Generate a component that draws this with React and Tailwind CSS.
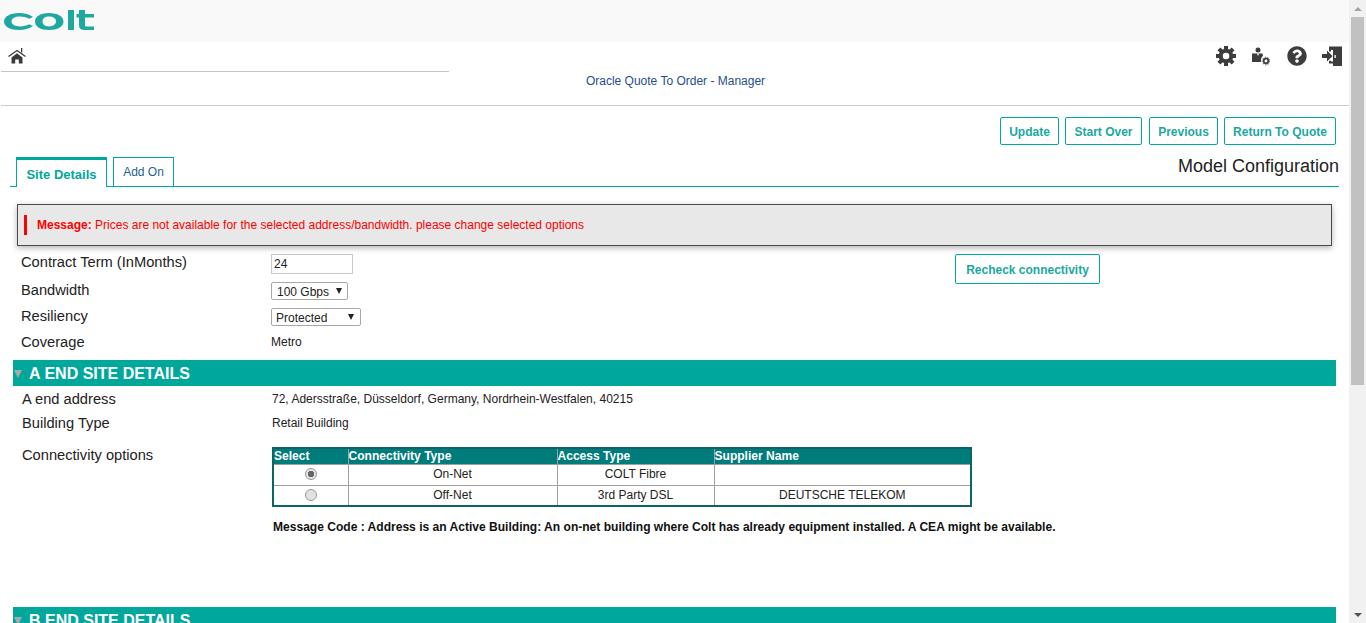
import React from "react";
import { FaQuestionCircle } from "react-icons/fa";

function Logo() {
  return (
    <svg width="92" height="22" viewBox="0 0 92 22" className="block">
      <path fillRule="evenodd" fill="#1fa89f" d="M1 12.500C1 7.500 7.500 4 16 4C21.500 4 26.500 5.500 30 8L26 9.800C23.500 8.400 20.500 7.600 17 7.600C12 7.600 8.500 9.500 8.500 12.500C8.500 15.500 12 17.400 17 17.400C20.500 17.400 23.500 16.600 26 15.200L30 17C26.500 19.500 21.500 21 16 21C7.500 21 1 17.500 1 12.500Z" />
      <path fillRule="evenodd" fill="#1fa89f" d="M46 4C54.500 4 60.500 7.500 60.500 12.500C60.500 17.500 54.500 21 46 21C37.500 21 32 17.500 32 12.500C32 7.500 37.500 4 46 4ZM46 7.600C42 7.600 39.500 9.500 39.500 12.500C39.500 15.500 42 17.400 46 17.400C50 17.400 53 15.500 53 12.500C53 9.500 50 7.600 46 7.600Z" />
      <rect x="65" y="1" width="6" height="20" fill="#1fa89f" />
      <path d="M76 1H82V5H91V8.500H82V16C82 17 82.500 17.500 84 17.500H91V21H82C78 21 76 19.500 76 16.500V8.500H73.500V5H76Z" fill="#1fa89f" />
    </svg>
  );
}

function HomeIcon() {
  return (
    <svg width="18" height="16" viewBox="0 0 18 16" className="block">
      <path d="M0.500 8.500L9 2.500L17.500 8.500" fill="none" stroke="#3a3a3a" strokeWidth="1.300" />
      <rect x="13" y="0" width="1.300" height="4.500" fill="#3a3a3a" />
      <path d="M3.500 9.500L9 5.300L14.500 9.500V15.500H10.800V11.500H7.200V15.500H3.500Z" fill="#3a3a3a" />
    </svg>
  );
}

function GearIcon() {
  const teeth = [0, 45, 90, 135, 180, 225, 270, 315];
  return (
    <svg width="20" height="20" viewBox="0 0 20 20" className="block">
      <circle cx="10" cy="10" r="5.300" fill="none" stroke="#3d3d3d" strokeWidth="4" />
      {teeth.map((a) => (
        <rect key={a} x="8" y="0" width="4" height="4" fill="#3d3d3d" transform={`rotate(${a} 10 10)`} />
      ))}
    </svg>
  );
}

function UserCog() {
  return (
    <svg width="20" height="20" viewBox="0 0 20 20" className="block">
      <circle cx="8" cy="4" r="2.500" fill="#3d3d3d" />
      <path d="M2 7.500H12.500L13 10C11.500 11 10.800 12.500 11 16H2Z" fill="#3d3d3d" />
      <path d="M6.800 7.500L8 10L9.200 7.500Z" fill="#fff" />
      <circle cx="16" cy="15" r="2.300" fill="none" stroke="#3d3d3d" strokeWidth="1.700" />
      <circle cx="16" cy="15" r="3.800" fill="none" stroke="#3d3d3d" strokeWidth="1" strokeDasharray="1.300 1.400" />
    </svg>
  );
}

function DoorIcon() {
  return (
    <svg width="20" height="20" viewBox="0 0 20 20" className="block">
      <path d="M7 0.500H20V20H11V17.500H7V14.800H9V15.500H11V4H9V5.500H7Z" fill="#3d3d3d" />
      <path d="M0 8H5V4.500L10.500 10L5 15.500V12H0Z" fill="#3d3d3d" />
      <rect x="12.500" y="9" width="1.300" height="3" fill="#fff" />
    </svg>
  );
}

function ActionButton({ children, className = "" }) {
  return (
    <button className={"h-[28px] pt-[1px] border border-[#00a79b] rounded-[2px] bg-white text-[12px] font-bold text-[#1ba89f] " + className}>
      {children}
    </button>
  );
}

function Label({ children, className = "" }) {
  return <div className={"w-[250px] text-[14.67px] leading-[16px] text-[#222] " + className}>{children}</div>;
}

function SelectBox({ width, value, label, textPad, arrowRight }) {
  return (
    <div className={"relative h-[18px] " + width}>
      <select
        defaultValue={value}
        className={"block appearance-none w-full h-full pb-[1px] border border-[#a8a8a8] rounded-[2px] bg-white text-[12px] text-[#222] " + textPad}
      >
        <option value={value}>{label}</option>
      </select>
      <span className={"absolute top-[6px] w-0 h-0 border-x-[3.500px] border-x-transparent border-t-[6px] border-t-[#222] pointer-events-none " + arrowRight} />
    </div>
  );
}

function Radio({ checked }) {
  return (
    <input
      type="radio"
      name="c"
      defaultChecked={checked}
      className="appearance-none block mx-auto w-[12px] h-[12px] rounded-full border border-[#999] bg-[#e2e2e2] checked:bg-[radial-gradient(circle,#666_0,#666_3px,#e6e6e6_3.500px)]"
    />
  );
}

function SectionBar({ children, className = "" }) {
  return (
    <div className={"ml-[13px] w-[1323px] h-[26px] bg-[#00a79b] flex items-center shrink-0 " + className}>
      <span className="ml-[1px] mr-[7px] w-0 h-0 mt-[2px] border-x-[4px] border-x-transparent border-t-[8px] border-t-[#a9a9a9]" />
      <span className="text-[16px] font-bold text-white leading-[26px] mt-[2px]">{children}</span>
    </div>
  );
}

const th = "border border-[#a0a0a0] bg-[#007c7c] text-white text-[12.05px] font-bold text-left leading-[14px] p-0";
const td = "border border-[#a0a0a0] text-[12px] text-[#222] text-center h-[21px] p-0";

export default function App() {
  return (
    <div className="w-[1366px] h-[623px] overflow-hidden flex bg-white font-['Liberation_Sans',Arial,sans-serif]">
      <div className="w-[1349px] shrink-0 flex flex-col">
        <header className="h-[42px] bg-[#f9f9f9] pl-[3px] pt-[9px] shrink-0">
          <Logo />
        </header>

        <div className="h-[64px] shrink-0 border-b border-[#c8ced3] flex ml-[1px]">
          <div className="w-[448px] h-[30px] border-b border-[#c0c6cb] pl-[7px] pt-[6px]">
            <HomeIcon />
          </div>
          <div className="w-[453px] pt-[32px] text-center text-[12px] leading-[14px] text-[#1f4e8c]">
            Oracle Quote To Order - Manager
          </div>
          <div className="flex-1 flex items-start justify-end pt-[4px] pr-[7px]">
            <GearIcon />
            <div className="ml-[14px]"><UserCog /></div>
            <FaQuestionCircle className="ml-[17px] w-[20px] h-[20px] text-[#3d3d3d]" />
            <div className="ml-[15px]"><DoorIcon /></div>
          </div>
        </div>

        <div className="h-[28px] mt-[11px] shrink-0 flex justify-end pr-[13px]">
          <ActionButton className="w-[59px]">Update</ActionButton>
          <ActionButton className="w-[77px] ml-[6px]">Start Over</ActionButton>
          <ActionButton className="w-[69px] ml-[7px]">Previous</ActionButton>
          <ActionButton className="w-[112px] ml-[6px]">Return To Quote</ActionButton>
        </div>

        <div className="ml-[10px] w-[1329px] h-[30px] mt-[12px] shrink-0 border-b border-[#00a79b] flex items-end relative">
          <div className="ml-[6px] w-[91px] h-[30px] border-x border-t-[3px] border-[#00a79b] border-b-0 bg-white -mb-[1px] text-[13px] font-bold text-[#00a79b] text-center leading-[29px]">
            Site Details
          </div>
          <div className="ml-[6px] w-[61px] h-[29px] border-x border-t border-[#00a79b] text-[12px] text-[#1f5f99] text-center leading-[29px]">
            Add On
          </div>
          <div className="ml-auto self-start text-[18px] leading-[20px] text-[#222] -mt-[1px]">Model Configuration</div>
        </div>

        <div className="ml-[17px] w-[1315px] h-[42px] mt-[17px] shrink-0 bg-[#e8e8e8] border border-[#4a4a4a] shadow-[0_2px_6px_rgba(0,0,0,0.3)] flex items-center pl-[6px]">
          <div className="w-[3px] h-[20px] bg-[#ff0000] mr-[10px]" />
          <div className="text-[12px] text-[#ff0000]">
            <span className="font-bold">Message:</span> Prices are not available for the selected address/bandwidth. please change selected options
          </div>
        </div>

        <div className="flex h-[106px] mt-[8px] shrink-0 pl-[21px]">
          <div className="w-[934px] flex flex-col">
            <div className="flex items-start h-[28px]">
              <Label>Contract Term (InMonths)</Label>
              <input
                readOnly
                value="24"
                className="w-[82px] h-[20px] border border-[#c8c8c8] bg-white px-[2px] text-[12px] text-[#222]"
              />
            </div>
            <div className="flex items-center h-[18px]">
              <Label className="-mt-[2px]">Bandwidth</Label>
              <SelectBox width="w-[77px]" value="100" label="100 Gbps" textPad="pl-[5px]" arrowRight="right-[6px]" />
            </div>
            <div className="flex items-center h-[18px] mt-[8px]">
              <Label className="-mt-[2px]">Resiliency</Label>
              <SelectBox width="w-[90px]" value="p" label="Protected" textPad="pl-[4px]" arrowRight="right-[7px]" />
            </div>
            <div className="flex items-center h-[16px] mt-[8px]">
              <Label>Coverage</Label>
              <div className="text-[12px] text-[#222]">Metro</div>
            </div>
          </div>
          <ActionButton className="w-[145px] !h-[30px]">Recheck connectivity</ActionButton>
        </div>

        <SectionBar>A END SITE DETAILS</SectionBar>

        <div className="pl-[22px] flex flex-col shrink-0">
          <div className="flex items-center h-[16px] mt-[5px]">
            <Label>A end address</Label>
            <div className="text-[12.02px] text-[#222]">72, Adersstraße, Düsseldorf, Germany, Nordrhein-Westfalen, 40215</div>
          </div>
          <div className="flex items-center h-[16px] mt-[8px]">
            <Label>Building Type</Label>
            <div className="text-[12px] text-[#222]">Retail Building</div>
          </div>
          <div className="flex items-start mt-[16px]">
            <Label>Connectivity options</Label>
            <div>
              <table className="w-[700px] table-fixed border-collapse border-2 border-[#0d6464]">
                <colgroup>
                  <col className="w-[75px]" />
                  <col className="w-[209px]" />
                  <col className="w-[157px]" />
                  <col />
                </colgroup>
                <thead>
                  <tr className="h-[16px]">
                    <th className={th}>Select</th>
                    <th className={th}>Connectivity Type</th>
                    <th className={th}>Access Type</th>
                    <th className={th}>Supplier Name</th>
                  </tr>
                </thead>
                <tbody>
                  <tr>
                    <td className={td + " pb-[1px]"}>
                      <Radio checked />
                    </td>
                    <td className={td + " pb-[1px]"}>On-Net</td>
                    <td className={td + " pb-[1px]"}>COLT Fibre</td>
                    <td className={td}></td>
                  </tr>
                  <tr>
                    <td className={td}>
                      <Radio />
                    </td>
                    <td className={td}>Off-Net</td>
                    <td className={td}>3rd Party DSL</td>
                    <td className={td}>DEUTSCHE TELEKOM</td>
                  </tr>
                </tbody>
              </table>
              <div className="mt-[13px] pl-[1px] text-[12.05px] leading-[14px] font-bold text-[#111] whitespace-nowrap">
                Message Code : Address is an Active Building: An on-net building where Colt has already equipment installed. A CEA might be available.
              </div>
            </div>
          </div>
        </div>

        <SectionBar className="mt-[73px]">B END SITE DETAILS</SectionBar>
      </div>

      <div className="w-[17px] h-[623px] shrink-0 bg-[#f1f1f1] flex flex-col items-center">
        <div className="h-[17px] flex items-center justify-center">
          <div className="w-0 h-0 border-x-[4px] border-x-transparent border-b-[4px] border-b-[#a3a3a3]" />
        </div>
        <div className="w-[13px] h-[368px] bg-[#c1c1c1]" />
        <div className="flex-1" />
        <div className="h-[17px] flex items-center justify-center">
          <div className="w-0 h-0 border-x-[4px] border-x-transparent border-t-[4px] border-t-[#505050]" />
        </div>
      </div>
    </div>
  );
}
